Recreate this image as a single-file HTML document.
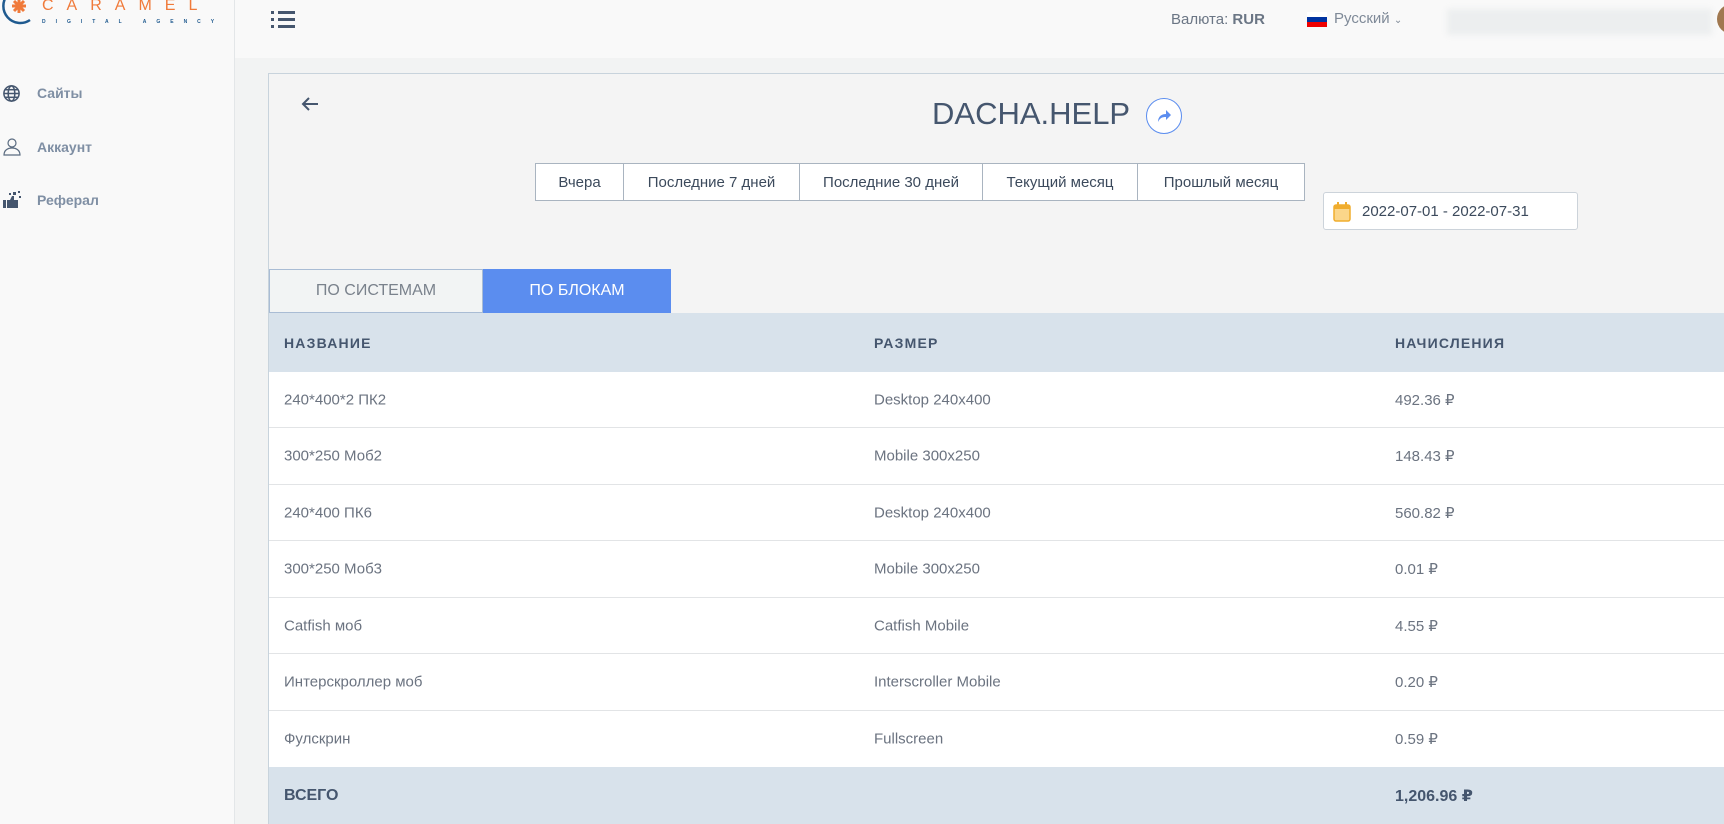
<!DOCTYPE html>
<html style="width:1724px;height:824px;overflow:hidden"><head><meta charset="utf-8"><style>
*{box-sizing:border-box;margin:0;padding:0}
body{width:1724px;height:824px;overflow:hidden;background:#f2f3f3;font-family:"Liberation Sans","DejaVu Sans",sans-serif;position:relative}
.side{position:absolute;left:0;top:0;width:235px;height:824px;background:#f9f9f9;border-right:1px solid #e3e6e8}
.hdr{position:absolute;left:235px;top:0;width:1489px;height:58px;background:#f9f9f9}
.nav{position:absolute;left:37px;font-size:14px;font-weight:bold;color:#7f8fa4}
.card{position:absolute;left:268px;top:73px;width:1456px;height:751px;background:#f4f4f4;border:1px solid #c8d3dc;border-right:none;border-bottom:none}
.abs{position:absolute}
.btns{position:absolute;left:535px;top:163px;height:38px;display:flex;border:1px solid #a9b4c0;background:#fff}
.btns div{border-right:1px solid #a9b4c0;font-size:15px;color:#3c4a5c;display:flex;align-items:center;justify-content:center}
.btns div:last-child{border-right:none}
.row{position:absolute;left:269px;width:1455px;background:#fff;border-bottom:1px solid #e2e4e6;font-size:15px;color:#6b7380}
.row span{position:absolute;top:50%;transform:translateY(-50%)}
.c1{left:15px}.c2{left:605px}.c3{left:1126px}
.th{background:#d8e2eb;color:#45566e;font-weight:bold;letter-spacing:1.2px;font-size:14px}
</style></head><body>
<div class="side">
 <svg class="abs" style="left:0;top:-14px" width="40" height="40" viewBox="0 0 40 40"><path d="M30 34A17 17 0 1 1 30 6" fill="none" stroke="#1f5a8f" stroke-width="2.5"/><g stroke="#f07a3a" stroke-width="3"><line x1="12" y1="20" x2="26" y2="20"/><line x1="19" y1="13" x2="19" y2="27"/><line x1="14" y1="15" x2="24" y2="25"/><line x1="24" y1="15" x2="14" y2="25"/></g></svg>
 <div class="abs" style="left:42px;top:-3px;font-size:16px;letter-spacing:13px;color:#f07a3a">CARAMEL</div>
 <div class="abs" style="left:42px;top:19px;font-size:5px;letter-spacing:10px;color:#1f5a8f;font-weight:bold">DIGITAL AGENCY</div>
 <svg class="abs" style="left:2px;top:84px" width="19" height="19" viewBox="0 0 20 20" fill="none" stroke="#45566e" stroke-width="1.6"><circle cx="10" cy="10" r="8"/><ellipse cx="10" cy="10" rx="3.5" ry="8"/><line x1="2" y1="10" x2="18" y2="10"/><line x1="3" y1="6" x2="17" y2="6"/><line x1="3" y1="14" x2="17" y2="14"/></svg>
 <div class="nav" style="top:85px">Сайты</div>
 <svg class="abs" style="left:3px;top:137px" width="18" height="19" viewBox="0 0 18 19" fill="none" stroke="#5a6b80" stroke-width="1.2"><circle cx="9" cy="6" r="4"/><path d="M1 18c0-5 4-7 8-7s8 2 8 7z"/></svg>
 <div class="nav" style="top:139px">Аккаунт</div>
 <svg class="abs" style="left:2px;top:189px" width="20" height="20" viewBox="0 0 20 20" fill="#45566e"><rect x="1" y="11" width="3" height="8"/><path d="M5 11h3l2-4h2v4h4v8H5z"/><rect x="11" y="3" width="3" height="3"/><rect x="16" y="2" width="2" height="2"/><rect x="17" y="7" width="2" height="2"/><rect x="7" y="4" width="2" height="2"/></svg>
 <div class="nav" style="top:192px">Реферал</div>
</div>
<div class="hdr">
 <svg class="abs" style="left:36px;top:11px" width="24" height="18" viewBox="0 0 24 18" fill="#45566e"><rect x="0" y="0" width="3" height="3"/><rect x="0" y="7" width="3" height="3"/><rect x="0" y="14" width="3" height="3"/><rect x="7" y="0" width="17" height="3"/><rect x="7" y="7" width="17" height="3"/><rect x="7" y="14" width="17" height="3"/></svg>
 <div class="abs" style="left:936px;top:11px;font-size:15px;color:#6b7685">Валюта: <b style="color:#6b7685">RUR</b></div>
 <div class="abs" style="left:1072px;top:12px;width:20px;height:15px;background:linear-gradient(#fff 0 33%,#0033a0 33% 66%,#e00 66%)"></div>
 <div class="abs" style="left:1099px;top:10px;font-size:15px;color:#7f8a98">Русский <span style="font-size:10px">&#8964;</span></div>
 <div class="abs" style="left:1212px;top:9px;width:265px;height:26px;background:#eceeef;filter:blur(3px)"></div>
 <div class="abs" style="left:1482px;top:4px;width:30px;height:30px;border-radius:50%;background:#a07850"></div>
</div>
<div class="card">
 <svg class="abs" style="left:32px;top:22px" width="18" height="16" viewBox="0 0 18 16" fill="none" stroke="#45566e" stroke-width="2"><path d="M17 8H2M8 2L2 8l6 6"/></svg>
</div>
<div class="abs" style="left:932px;top:96px;font-size:31px;color:#45566e">DACHA.HELP</div>
<div class="abs" style="left:1146px;top:98px;width:36px;height:36px;border-radius:50%;border:1.5px solid #5b8def;background:#fff"><svg style="position:absolute;left:9px;top:9px" width="16" height="16" viewBox="0 0 16 16"><path d="M2 14c0-6 4-8 8-8V2l5 5-5 5V9c-4 0-6 1-8 5z" fill="#5b8def"/></svg></div>
<div class="btns">
 <div style="width:88px">Вчера</div><div style="width:176px">Последние 7 дней</div><div style="width:183px">Последние 30 дней</div><div style="width:155px">Текущий месяц</div><div style="width:166px">Прошлый месяц</div>
</div>
<div class="abs" style="left:1323px;top:192px;width:255px;height:38px;background:#fff;border:1px solid #ccd3da;border-radius:3px;font-size:15px;color:#3c4a5c;padding:10px 0 0 38px">2022-07-01 - 2022-07-31
 <svg style="position:absolute;left:9px;top:9px" width="18" height="20" viewBox="0 0 18 20"><rect x="1" y="3" width="16" height="16" rx="2" fill="#fbd68a" stroke="#f0ad2e" stroke-width="1.5"/><rect x="1" y="3" width="16" height="4" fill="#f0ad2e"/><rect x="4" y="0" width="2" height="5" fill="#f0ad2e"/><rect x="12" y="0" width="2" height="5" fill="#f0ad2e"/></svg></div>
<div class="abs" style="left:269px;top:269px;width:214px;height:44px;background:#f2f4f4;border:1.5px solid #a9bcd4;font-size:16px;color:#7a828c;display:flex;align-items:center;justify-content:center">ПО СИСТЕМАМ</div>
<div class="abs" style="left:483px;top:269px;width:188px;height:44px;background:#5b8def;font-size:16px;color:#fff;display:flex;align-items:center;justify-content:center">ПО БЛОКАМ</div>
<div class="row th" style="top:313px;height:59px;border:none"><span class="c1">НАЗВАНИЕ</span><span class="c2">РАЗМЕР</span><span class="c3">НАЧИСЛЕНИЯ</span></div>
<div class="row" style="top:372px;height:56px"><span class="c1">240*400*2 ПК2</span><span class="c2">Desktop 240x400</span><span class="c3">492.36 ₽</span></div>
<div class="row" style="top:428px;height:57px"><span class="c1">300*250 Моб2</span><span class="c2">Mobile 300x250</span><span class="c3">148.43 ₽</span></div>
<div class="row" style="top:485px;height:56px"><span class="c1">240*400 ПК6</span><span class="c2">Desktop 240x400</span><span class="c3">560.82 ₽</span></div>
<div class="row" style="top:541px;height:57px"><span class="c1">300*250 Моб3</span><span class="c2">Mobile 300x250</span><span class="c3">0.01 ₽</span></div>
<div class="row" style="top:598px;height:56px"><span class="c1">Catfish моб</span><span class="c2">Catfish Mobile</span><span class="c3">4.55 ₽</span></div>
<div class="row" style="top:654px;height:57px"><span class="c1">Интерскроллер моб</span><span class="c2">Interscroller Mobile</span><span class="c3">0.20 ₽</span></div>
<div class="row" style="top:711px;height:56px;border:none"><span class="c1">Фулскрин</span><span class="c2">Fullscreen</span><span class="c3">0.59 ₽</span></div>
<div class="row th" style="top:767px;height:57px;border:none;font-size:16px;letter-spacing:0"><span class="c1">ВСЕГО</span><span class="c3">1,206.96 ₽</span></div>
</body></html>
